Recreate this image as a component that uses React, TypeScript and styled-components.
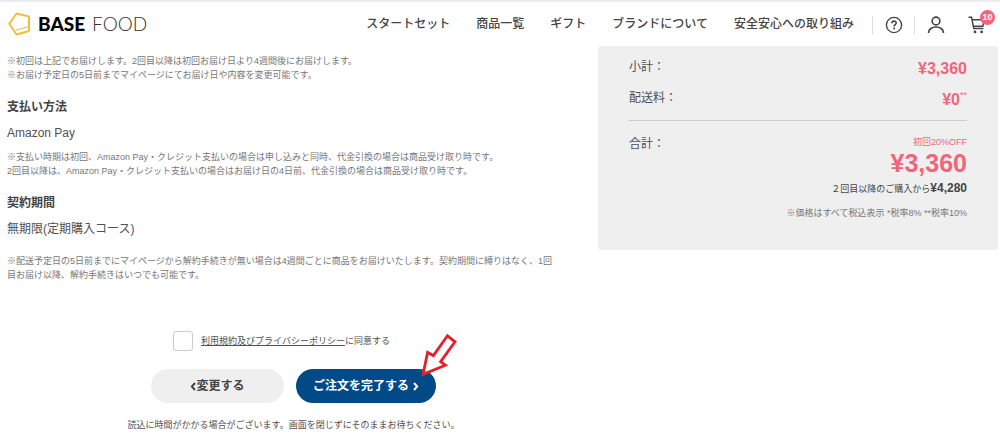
import React from 'react';
import styled, { createGlobalStyle } from 'styled-components';

const GlobalStyle = createGlobalStyle`
  * { box-sizing: border-box; }
  body {
    margin: 0;
    background: #fff;
    color: #505050;
    font-family: "Liberation Sans", "Noto Sans CJK JP", sans-serif;
    font-size: 12px;
    line-height: 18px;
  }
  h2, p, dl, dd, dt, ul { margin: 0; padding: 0; }
  a { color: inherit; }
  button, input { font: inherit; color: inherit; }
`;

const Header = styled.header`
  display: flex;
  align-items: center;
  height: 46px;
  padding: 0 2px 0 8px;
  border-top: 2px solid #ececec;
`;

const Logo = styled.a`
  display: flex;
  align-items: center;
  gap: 7px;
  margin-right: auto;
  color: #000;
  font-family: Lato, sans-serif;
  font-size: 19px;
  line-height: 24px;
  text-decoration: none;
`;

const LogoText = styled.span`
  display: flex;
  gap: 7px;
`;

const LogoWord = styled.span<{ $light?: boolean }>`
  color: ${(p) => (p.$light ? '#333' : '#000')};
  font-weight: ${(p) => (p.$light ? 300 : 900)};
`;

const Nav = styled.nav`
  display: flex;
  gap: 26px;
  margin-right: 18px;
  color: #444;
`;

const NavLink = styled.a`
  font-weight: 500;
  text-decoration: none;
  white-space: nowrap;
`;

const IconLink = styled.a<{ $divided?: boolean }>`
  position: relative;
  display: flex;
  align-items: center;
  justify-content: center;
  width: 42px;
  height: 18px;
  border-left: ${(p) => (p.$divided ? '1px solid #ddd' : '0')};
`;

const Badge = styled.span`
  position: absolute;
  top: -6px;
  right: 3px;
  width: 15px;
  height: 15px;
  border-radius: 50%;
  background: #f2647a;
  color: #fff;
  font-size: 9px;
  font-weight: 700;
  line-height: 15px;
  text-align: center;
`;

const Main = styled.main`
  display: grid;
  grid-template-columns: minmax(0, 573fr) minmax(0, 400fr);
  align-items: start;
  gap: 18px;
  padding: 0 2px 0 7px;
`;

const Details = styled.div`
  padding-top: 8px;
`;

const Note = styled.p`
  padding-right: 24px;
  color: #777;
  font-size: 9px;
  line-height: 14px;
`;

const Section = styled.section`
  display: flex;
  flex-direction: column;
  gap: 8px;
  margin-top: 16px;
`;

const SectionTitle = styled.h2`
  color: #444;
  font-size: 12px;
  font-weight: 700;
`;

const TermNote = styled(Note)`
  margin-top: 8px;
`;

const OrderForm = styled.form`
  display: flex;
  flex-direction: column;
  align-items: center;
  margin-top: 49px;
`;

const Agreement = styled.div`
  display: flex;
  align-items: center;
  gap: 8px;
  padding-right: 24px;
  font-size: 9px;
`;

const Checkbox = styled.input`
  appearance: none;
  width: 20px;
  height: 20px;
  margin: 0;
  border: 1px solid #ccc;
  border-radius: 3px;
  background: #fff;
  &:checked { background: #004b87; }
`;

const Actions = styled.div`
  display: flex;
  gap: 12px;
  margin: 18px 0 15px;
`;

const Action = styled.button<{ $primary?: boolean }>`
  display: flex;
  align-items: center;
  justify-content: center;
  gap: ${(p) => (p.$primary ? '4px' : '0')};
  min-width: ${(p) => (p.$primary ? '140px' : '133px')};
  height: 34px;
  padding: 0 12px;
  border: 0;
  border-radius: 17px;
  background: ${(p) => (p.$primary ? '#004b87' : '#efefef')};
  color: ${(p) => (p.$primary ? '#fff' : '#444')};
  font-weight: 700;
`;

const Pointed = styled.div`
  position: relative;
`;

const Pointer = styled.svg`
  position: absolute;
  top: -36px;
  right: -22px;
`;

const Loading = styled.p`
  font-size: 9px;
  line-height: 14px;
`;

const Summary = styled.aside`
  padding: 12px 31px 30px;
  border-radius: 3px;
  background: #efefef;
`;

const Costs = styled.dl`
  display: flex;
  flex-direction: column;
  gap: 11px;
`;

const Cost = styled.div<{ $total?: boolean }>`
  display: flex;
  justify-content: space-between;
  padding-top: ${(p) => (p.$total ? '14px' : '0')};
  border-top: ${(p) => (p.$total ? '1px solid #ccc' : '0')};
`;

const Price = styled.dd`
  padding-top: 2px;
  color: #f2647a;
  font-size: 16px;
  font-weight: 700;
`;

const Mark = styled.sup`
  font-size: 9px;
  font-weight: 400;
  line-height: 9px;
  vertical-align: top;
`;

const Total = styled.dd`
  color: #f2647a;
  text-align: right;
`;

const Discount = styled.p`
  font-size: 9px;
  line-height: 14px;
`;

const TotalPrice = styled.p`
  font-size: 25px;
  font-weight: 700;
  line-height: 28px;
`;

const NextPrice = styled.p`
  margin-top: 2px;
  color: #444;
  font-size: 9px;
`;

const NextAmount = styled.strong`
  font-size: 12px;
`;

const TaxNote = styled.p`
  margin-top: 8px;
  color: #777;
  font-size: 9px;
  line-height: 14px;
  text-align: right;
`;

const IconBar = styled.div`
  display: flex;
  padding-top: 2px;
`;

const navItems = ['スタートセット', '商品一覧', 'ギフト', 'ブランドについて', '安全安心への取り組み'];

const LogoMark = () => (
  <svg width="23" height="24" viewBox="0 0 23 24" fill="none" stroke="#f3bd3c" strokeWidth="2" strokeLinejoin="round">
    <path d="M8.5 1.5 21 4.5v14.5L8.5 22.5 1.2 11.8z" />
    <path d="M7.5 18.3 20.5 14.6" strokeWidth="1" />
  </svg>
);

const HelpIcon = () => (
  <svg width="18" height="18" viewBox="0 0 18 18" fill="none" stroke="#444" strokeWidth="1.4">
    <circle cx="9" cy="9" r="7.6" />
    <path d="M6.9 7.3c0-2.9 4.3-2.8 4.3-.2 0 1.5-2.1 1.7-2.1 3.4" strokeWidth="1.6" />
    <circle cx="9.1" cy="12.6" r="1" fill="#444" stroke="none" />
  </svg>
);

const UserIcon = () => (
  <svg width="18" height="18" viewBox="0 0 18 18" fill="none" stroke="#444" strokeWidth="1.6">
    <circle cx="9" cy="5" r="3.9" />
    <path d="M1.5 17c0-8 15-8 15 0" />
  </svg>
);

const CartIcon = () => (
  <svg width="18" height="18" viewBox="0 0 18 18" fill="none" stroke="#444" strokeWidth="1.5">
    <path d="M.5 1.2h3l2.3 11.4h9.6M4.1 3.8h12.4l-1.7 6.4H5.4" />
    <circle cx="7" cy="15.9" r="1.4" fill="#444" stroke="none" />
    <circle cx="13.6" cy="15.9" r="1.4" fill="#444" stroke="none" />
  </svg>
);

const Chevron = ({ left }: { left?: boolean }) => (
  <svg width="6" height="9" viewBox="0 0 6 9" fill="none" stroke="currentColor" strokeWidth="1.9">
    <path d={left ? 'M5 1 1.8 4.5 5 8' : 'M1 1l3.2 3.5L1 8'} />
  </svg>
);

export default function App() {
  return (
    <>
      <GlobalStyle />
      <Header lang="ja">
        <Logo href="#">
          <LogoMark />
          <LogoText>
            <LogoWord>BASE</LogoWord>
            <LogoWord $light>FOOD</LogoWord>
          </LogoText>
        </Logo>
        <Nav>
          {navItems.map((item) => (
            <NavLink href="#" key={item}>{item}</NavLink>
          ))}
        </Nav>
        <IconBar>
          <IconLink href="#" $divided aria-label="ヘルプ"><HelpIcon /></IconLink>
          <IconLink href="#" $divided aria-label="マイページ"><UserIcon /></IconLink>
          <IconLink href="#" aria-label="カート"><CartIcon /><Badge>10</Badge></IconLink>
        </IconBar>
      </Header>
      <Main lang="ja">
        <Details>
          <Note>
            ※初回は上記でお届けします。2回目以降は初回お届け日より4週間後にお届けします。<br />
            ※お届け予定日の5日前までマイページにてお届け日や内容を変更可能です。
          </Note>
          <Section>
            <SectionTitle>支払い方法</SectionTitle>
            <p>Amazon Pay</p>
            <Note>
              ※支払い時期は初回、Amazon Pay・クレジット支払いの場合は申し込みと同時、代金引換の場合は商品受け取り時です。<br />
              2回目以降は、Amazon Pay・クレジット支払いの場合はお届け日の4日前、代金引換の場合は商品受け取り時です。
            </Note>
          </Section>
          <Section>
            <SectionTitle>契約期間</SectionTitle>
            <p>無期限(定期購入コース)</p>
            <TermNote>
              ※配送予定日の5日前までにマイページから解約手続きが無い場合は4週間ごとに商品をお届けいたします。契約期間に縛りはなく、1回目お届け以降、解約手続きはいつでも可能です。
            </TermNote>
          </Section>
          <OrderForm onSubmit={(e) => e.preventDefault()}>
            <Agreement>
              <Checkbox type="checkbox" id="agree" />
              <label htmlFor="agree"><a href="#">利用規約及びプライバシーポリシー</a>に同意する</label>
            </Agreement>
            <Actions>
              <Action type="button"><Chevron left />変更する</Action>
              <Pointed>
                <Action type="submit" $primary>ご注文を完了する<Chevron /></Action>
                <Pointer width="40" height="46" viewBox="0 0 40 46" fill="#fff" stroke="#e0202a" strokeWidth="2.8" aria-hidden="true">
                  <path d="M29.5 2.8 37 8.8 22.6 28.6 27.4 32.2 5 41.4 9.6 19.4 15.4 22.6z" />
                </Pointer>
              </Pointed>
            </Actions>
            <Loading>読込に時間がかかる場合がございます。画面を閉じずにそのままお待ちください。</Loading>
          </OrderForm>
        </Details>
        <Summary>
          <Costs>
            <Cost><dt>小計：</dt><Price>¥3,360</Price></Cost>
            <Cost><dt>配送料：</dt><Price>¥0<Mark>**</Mark></Price></Cost>
            <Cost $total>
              <dt>合計：</dt>
              <Total>
                <Discount>初回20%OFF</Discount>
                <TotalPrice>¥3,360</TotalPrice>
                <NextPrice>２回目以降のご購入から<NextAmount>¥4,280</NextAmount></NextPrice>
              </Total>
            </Cost>
          </Costs>
          <TaxNote>※価格はすべて税込表示 *税率8% **税率10%</TaxNote>
        </Summary>
      </Main>
    </>
  );
}
